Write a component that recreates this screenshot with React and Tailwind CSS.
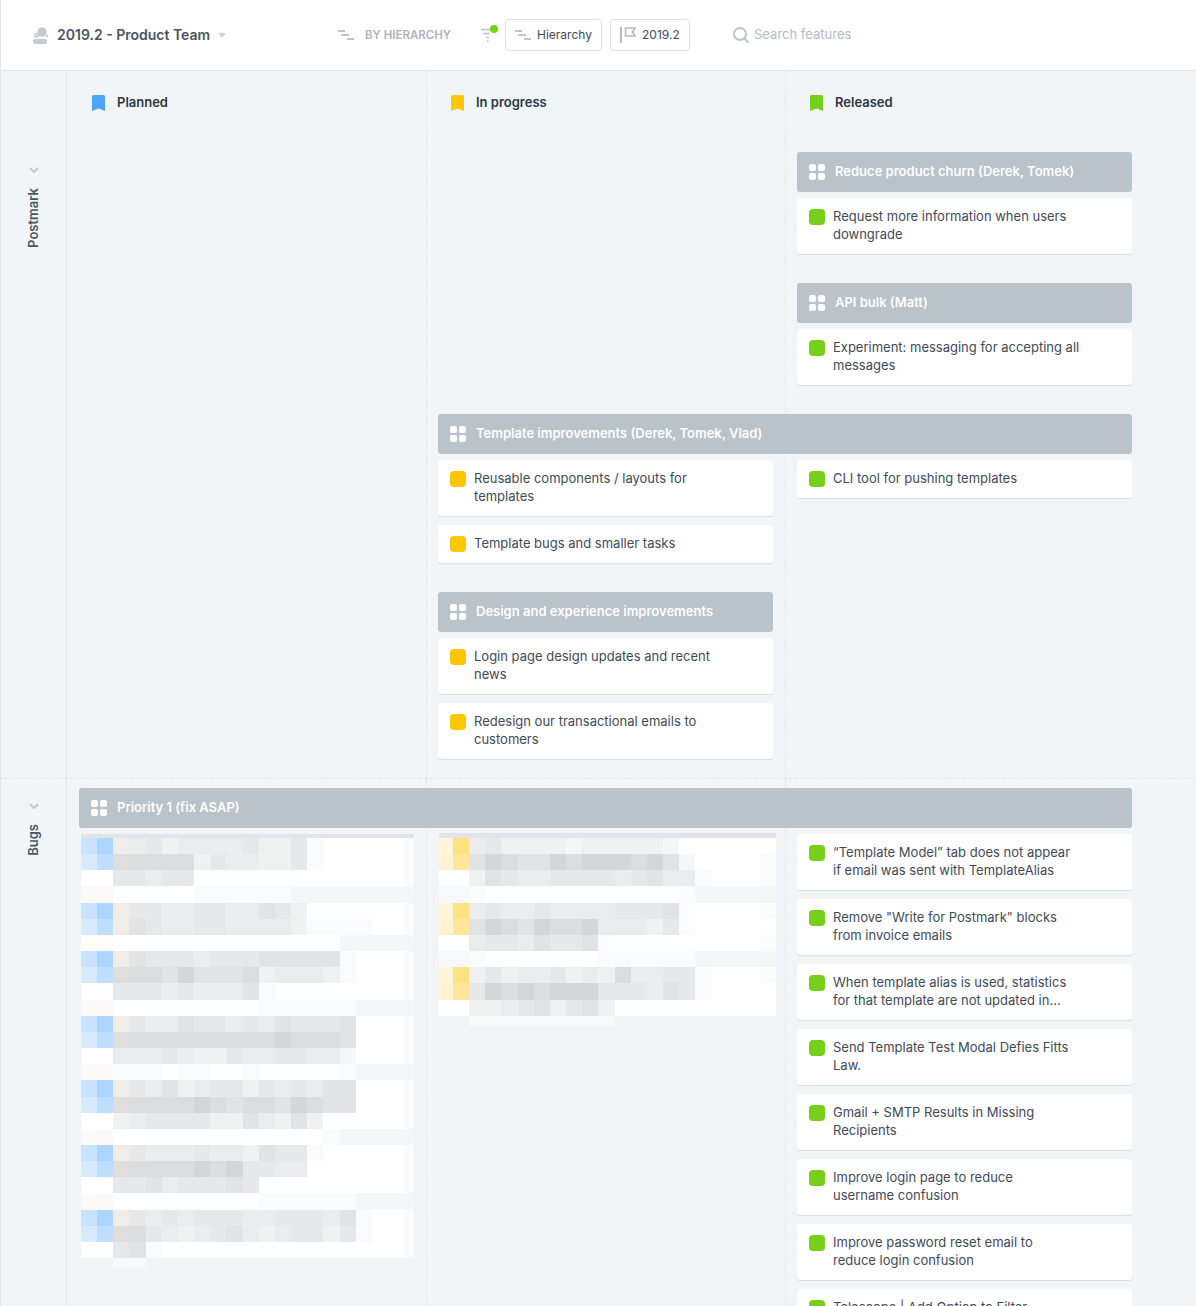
// mosaic colours, one class per key
const CELL = {
    0: 'bg-white',
    1: 'bg-[#fafbfc]',
    2: 'bg-[#f5f6f8]',
    3: 'bg-[#f0f1f1]',
    4: 'bg-[#ebecee]',
    5: 'bg-[#e7e8ea]',
    6: 'bg-[#e2e3e5]',
    7: 'bg-[#dcdddf]',
    8: 'bg-[#d5d6d8]',
    b: 'bg-[#c8e2ff]',
    B: 'bg-[#acd5ff]',
    c: 'bg-[#d8eaff]',
    d: 'bg-[#c0deff]',
    n: 'bg-[#f0ede9]',
    m: 'bg-[#e0dedc]',
    w: 'bg-[#fcfaf7]',
    x: 'bg-[#fdfcf9]',
    l: 'bg-[#fff5da]',
    k: 'bg-[#fff3d4]',
    Y: 'bg-[#ffe27f]',
    Z: 'bg-[#ffe69b]',
    f: 'bg-[#f7f9fc]',
    e: 'bg-[#f2f5f7]',
    g: 'bg-[#f7f9fa]',
};

const BLUE_ROWS = [
    'bBn453444453351000001',
    'cdm777735443351000001',
    '005545500000000000001',
    'ww0000011111122222222',
    'bBn554455446530000001',
    'cdn654455444431111001',
    'xx0000000000000022222',
    'bBn655545556666610001',
    'cdm776866673444310001',
    '005554544461000000001',
    'ww0000000001111112222',
    'bBn544655454655560001',
    'cdm777777777877760001',
    '004445433544554420001',
    'ww1110110010000012222',
    'bBn546345535454660001',
    'cdm777787677687660001',
    '003455553364363000001',
    'ww0000000000000122222',
    'bBn544454436551000001',
    'cdm777787855440000001',
    '005564555650000000001',
    'ww0000000001111112222',
    'bBn545455544555461001',
    'cdm754345643455351001',
    '005610000000000000001',
];
const BLUE_LAST = 'eeggeeeeeeeeeeeeeeeee';

const YELLOW_ROWS = [
    'lY4533332333332000000',
    'kZ6876687888786200001',
    '003654455554564410001',
    'ff1000000000000122222',
    'lY4544544445556100001',
    'kZ6876877844435100000',
    '004554655610000000001',
    'ff1000000011111122222',
    'lY3534453437445510001',
    'kZ5878788855546510000',
    '003345635630000000000',
];
const YELLOW_LAST = 'eegggggggggeeeeeeeeee';

function MosaicRow({ row, height = 'h-[16.17px]', first = 'w-[16.17px]' }) {
    return (
        <div className={`flex ${height}`}>
            {row.split('').map((key, i) => (
                <div
                    key={i}
                    className={`${CELL[key]} ${i === 0 ? first : i === 20 ? 'flex-1' : 'w-[16.17px]'}`}
                />
            ))}
        </div>
    );
}

function BookmarkIcon({ className }) {
    return (
        <svg viewBox="0 0 13 16" className={`h-4 w-[13px] shrink-0 ${className}`}>
            <path d="M1.5 0h10A1.5 1.5 0 0 1 13 1.5V16l-6.5-2.400L0 16V1.500A1.500 1.500 0 0 1 1.500 0z" fill="currentColor" />
        </svg>
    );
}

function GridIcon() {
    return (
        <svg viewBox="0 0 16 16" className="h-4 w-4 shrink-0 text-white">
            <rect x="0" y="0" width="7" height="7" rx="2" fill="currentColor" />
            <rect x="9" y="0" width="7" height="7" rx="2" fill="currentColor" />
            <rect x="0" y="9" width="7" height="7" rx="2" fill="currentColor" />
            <rect x="9" y="9" width="7" height="7" rx="2" fill="currentColor" />
        </svg>
    );
}

function HierarchyIcon({ className = '' }) {
    return (
        <svg viewBox="0 0 16 10" className={`h-2.5 w-4 shrink-0 text-[#aab2ba] ${className}`}>
            <path d="M0 1h7M3 5h8M9 9h7" stroke="currentColor" strokeWidth="1.600" fill="none" />
        </svg>
    );
}

function Group({ title, className = '' }) {
    return (
        <div className={`flex h-10 items-center gap-[10px] rounded-[3px] bg-[#bac2ca] pl-[12px] text-[13px] font-semibold text-white ${className}`}>
            <GridIcon />
            <span className="-mt-px">{title}</span>
        </div>
    );
}

function Card({ color, lines }) {
    return (
        <div className="flex items-start gap-[8px] rounded-[3px] bg-white pb-[11px] pl-[12px] pr-2 pt-[9px] text-[13px] leading-[18px] text-[#3f4a57] shadow-[0_1px_1px_rgba(50,70,90,0.14)]">
            <div className={`mt-[2px] h-4 w-4 shrink-0 rounded-[4px] ${color}`} />
            <div>
                {lines.map((line) => (
                    <div key={line} className="whitespace-nowrap">{line}</div>
                ))}
            </div>
        </div>
    );
}

function ColumnHead({ icon, label }) {
    return (
        <div className="flex items-center gap-[12px] pl-[14px] text-[13px] font-semibold text-[#2c3540]">
            <BookmarkIcon className={icon} />
            <span>{label}</span>
        </div>
    );
}

function LaneLabel({ label, className }) {
    return (
        <div className={`flex w-[67px] shrink-0 flex-col items-center self-stretch border-x border-[#e1e6ea] ${className}`}>
            <svg viewBox="0 0 10 6" className="h-[6px] w-[10px] text-[#c3c9cf]">
                <path d="M1 1l4 4 4-4" stroke="currentColor" strokeWidth="2" fill="none" />
            </svg>
            <span className="mt-[15px] rotate-180 text-[13px] font-semibold text-[#4a5561] [writing-mode:vertical-rl]">
                {label}
            </span>
        </div>
    );
}

const GREEN = 'bg-[#76cf1b]';
const YELLOW = 'bg-[#ffc700]';

const BUGS = [
    ['“Template Model” tab does not appear', 'if email was sent with TemplateAlias'],
    ['Remove "Write for Postmark" blocks', 'from invoice emails'],
    ['When template alias is used, statistics', 'for that template are not updated in...'],
    ['Send Template Test Modal Defies Fitts', 'Law.'],
    ['Gmail + SMTP Results in Missing', 'Recipients'],
    ['Improve login page to reduce', 'username confusion'],
    ['Improve password reset email to', 'reduce login confusion'],
    ['Telescope | Add Option to Filter'],
];

export default function App() {
    return (
        <div className="h-[1306px] overflow-hidden bg-[#f1f5f8] font-['Inter',sans-serif]">
            <header className="flex h-[71px] items-center border-b border-l border-[#e1e6ea] bg-white pl-[32px]">
                <svg viewBox="0 0 16 17" className="h-[17px] w-4 shrink-0 text-[#c5cad0]">
                    <circle cx="3.500" cy="8.500" r="2.800" fill="currentColor" opacity="0.7" />
                    <circle cx="9" cy="5" r="4.700" fill="currentColor" />
                    <circle cx="14" cy="8.800" r="1.300" fill="currentColor" />
                    <rect x="0" y="12" width="14" height="5" rx="2.500" fill="currentColor" />
                </svg>
                <span className="mb-[2px] ml-[8px] w-[161px] whitespace-nowrap text-[14px] font-semibold text-[#4a5561]">2019.2 - Product Team</span>
                <div className="h-0 w-0 border-x-[4px] border-t-[5px] border-x-transparent border-t-[#cdd2d7]" />
                <HierarchyIcon className="ml-[112px]" />
                <span className="ml-[11px] mt-[2px] text-[11.500px] font-semibold text-[#adb4bc]">BY HIERARCHY</span>
                <div className="relative ml-[30px] h-4 w-[16px]">
                    <svg viewBox="0 0 14 16" className="h-4 w-[14px] text-[#b9c0c7]">
                        <path d="M0 2.500h9M2.500 6.500h6M5 10.500h3M6 14h1.500" stroke="currentColor" strokeWidth="1.500" fill="none" />
                    </svg>
                    <div className="absolute -top-[2px] left-[9px] h-2 w-2 rounded-full bg-[#76cf1b]" />
                </div>
                <button className="ml-[8px] flex h-8 w-[97px] items-center gap-[6px] rounded-[3px] border border-[#dfe3e7] pl-[9px] text-[12px] text-[#3f4a57]">
                    <HierarchyIcon />
                    Hierarchy
                </button>
                <button className="ml-[8px] flex h-8 w-[80px] items-center gap-[5px] rounded-[3px] border border-[#dfe3e7] pl-[9px] text-[12px] text-[#3f4a57]">
                    <svg viewBox="0 0 17 16" className="h-4 w-[17px] shrink-0 text-[#b4bcc4]">
                        <path d="M1 0v16" stroke="currentColor" strokeWidth="2" fill="none" />
                        <path d="M5.500 1h9.500l-2.500 4 2.500 4H5.500z" stroke="currentColor" strokeWidth="1.600" fill="none" />
                    </svg>
                    2019.2
                </button>
                <svg viewBox="0 0 17 16" className="ml-[43px] h-4 w-[17px] shrink-0 text-[#bcc5cc]">
                    <circle cx="7" cy="7" r="6" stroke="currentColor" strokeWidth="2" fill="none" />
                    <path d="M11.500 11.500l4 4" stroke="currentColor" strokeWidth="2.200" fill="none" />
                </svg>
                <span className="ml-[4px] text-[13px] text-[#b4bcc4]">Search features</span>
            </header>

            <section className="flex border-b border-dashed border-[#dfe4e8]">
                <LaneLabel label="Postmark" className="pt-[96px]" />
                <div className="grid flex-1 grid-cols-[360px_359px_1fr] grid-rows-[81px_262px_46px_318px]">
                    <div className="col-start-1 row-span-full border-r border-dashed border-[#dfe4e8]" />
                    <div className="col-start-2 row-span-full border-r border-dashed border-[#dfe4e8]" />
                    <div className="col-start-1 row-start-1 pl-[11px] pt-[22px]">
                        <ColumnHead icon="text-[#4ba6ff]" label="Planned" />
                    </div>
                    <div className="col-start-2 row-start-1 pl-[10px] pt-[22px]">
                        <ColumnHead icon="text-[#ffc700]" label="In progress" />
                    </div>
                    <div className="col-start-3 row-start-1 pl-[10px] pt-[22px]">
                        <ColumnHead icon="text-[#76cf1b]" label="Released" />
                    </div>

                    <div className="col-start-3 row-start-2 flex w-[346px] flex-col pl-[11px]">
                        <Group title="Reduce product churn (Derek, Tomek)" />
                        <div className="mt-[6px]">
                            <Card color={GREEN} lines={['Request more information when users', 'downgrade']} />
                        </div>
                        <Group title="API bulk (Matt)" className="mt-[29px]" />
                        <div className="mt-[6px]">
                            <Card color={GREEN} lines={['Experiment: messaging for accepting all', 'messages']} />
                        </div>
                    </div>

                    <div className="col-span-2 col-start-2 row-start-3 w-[705px] pl-[11px]">
                        <Group title="Template improvements (Derek, Tomek, Vlad)" />
                    </div>

                    <div className="col-start-2 row-start-4 flex w-[346px] flex-col gap-[9px] pl-[11px]">
                        <Card color={YELLOW} lines={['Reusable components / layouts for', 'templates']} />
                        <Card color={YELLOW} lines={['Template bugs and smaller tasks']} />
                        <Group title="Design and experience improvements" className="mt-[20px]" />
                        <div className="-mt-[3px] flex flex-col gap-[9px]">
                            <Card color={YELLOW} lines={['Login page design updates and recent', 'news']} />
                            <Card color={YELLOW} lines={['Redesign our transactional emails to', 'customers']} />
                        </div>
                    </div>
                    <div className="col-start-3 row-start-4 w-[346px] pl-[11px]">
                        <Card color={GREEN} lines={['CLI tool for pushing templates']} />
                    </div>
                </div>
            </section>

            <section className="flex h-[527px]">
                <LaneLabel label="Bugs" className="pt-[24px]" />
                <div className="grid flex-1 grid-cols-[360px_359px_1fr] grid-rows-[49px_1fr]">
                    <div className="col-start-1 row-span-full border-r border-dashed border-[#dfe4e8]" />
                    <div className="col-start-2 row-span-full border-r border-dashed border-[#dfe4e8]" />

                    <div className="col-span-3 col-start-1 row-start-1 w-[1065px] pl-3 pt-[9px]">
                        <Group title="Priority 1 (fix ASAP)" />
                    </div>

                    <div className="col-start-1 row-start-2 w-[347px] pl-[14px] pt-[6px]">
                        <div className="h-1 bg-[#e1e5e9]" />
                        {BLUE_ROWS.map((row, i) => (
                            <MosaicRow key={i} row={row} />
                        ))}
                        <MosaicRow row={BLUE_LAST} height="h-[11px]" />
                    </div>

                    <div className="col-start-2 row-start-2 w-[349px] pl-[12px] pt-[5px]">
                        <div className="h-[5px] bg-[#e1e5e9]" />
                        {YELLOW_ROWS.map((row, i) => (
                            <MosaicRow key={i} row={row} first="w-[14px]" />
                        ))}
                        <MosaicRow row={YELLOW_LAST} height="h-[10px]" first="w-[14px]" />
                    </div>

                    <div className="col-start-3 row-start-2 flex w-[346px] flex-col gap-[9px] pl-[11px] pt-[6px]">
                        {BUGS.map((lines) => (
                            <Card key={lines[0]} color={GREEN} lines={lines} />
                        ))}
                    </div>
                </div>
            </section>
        </div>
    );
}
